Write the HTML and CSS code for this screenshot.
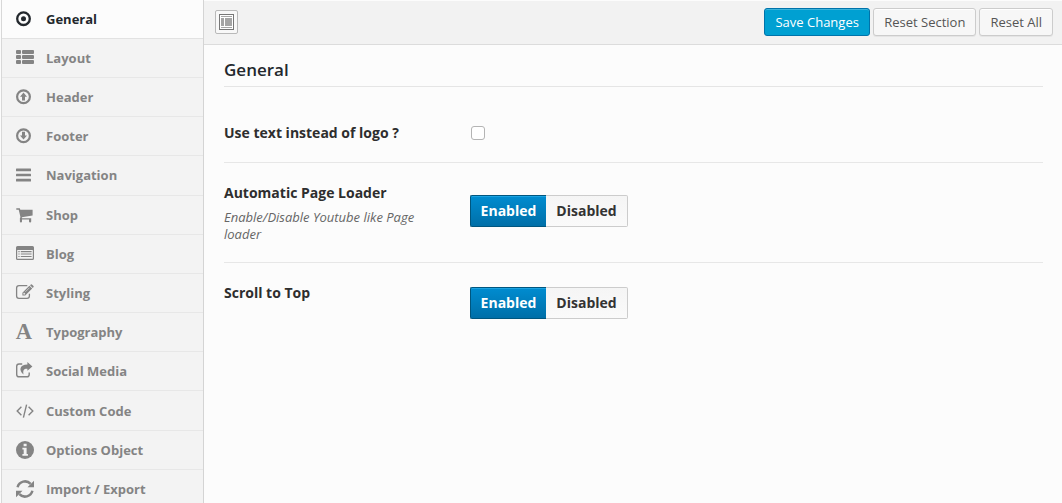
FILE: index.html
```html
<!DOCTYPE html>
<html lang="en">
<head>
<meta charset="utf-8">
<title>Theme Options</title>
<link rel="stylesheet" href="styles.css">
</head>
<body>
<div class="panel">
  <nav class="sidebar">
    <ul class="menu">
      <li class="item active"><svg class="icon" viewBox="0 0 20 20"><circle class="line" cx="8.5" cy="9.7" r="6.3" stroke-width="2.3"/><circle cx="8.5" cy="9.7" r="2.5"/></svg>General</li>
      <li class="item"><svg class="icon" viewBox="0 0 20 20"><rect x="1" y="2" width="5" height="4" rx="1"/><rect x="7" y="2" width="12" height="4" rx="1"/><rect x="1" y="7" width="5" height="4" rx="1"/><rect x="7" y="7" width="12" height="4" rx="1"/><rect x="1" y="12" width="5" height="4" rx="1"/><rect x="7" y="12" width="12" height="4" rx="1"/></svg>Layout</li>
      <li class="item"><svg class="icon" viewBox="0 0 20 20"><circle class="line" cx="8.5" cy="9.7" r="6.4" stroke-width="2.2"/><path d="M8.5 5.6 12 9.8H10V13.4H7V9.8H5Z"/></svg>Header</li>
      <li class="item"><svg class="icon" viewBox="0 0 20 20"><circle class="line" cx="8.5" cy="9.7" r="6.4" stroke-width="2.2"/><path d="M8.5 13.6 12 9.4H10V5.8H7V9.4H5Z"/></svg>Footer</li>
      <li class="item"><svg class="icon" viewBox="0 0 20 20"><rect x="1" y="3.6" width="15" height="2.6" rx=".5"/><rect x="1" y="8.7" width="15" height="2.6" rx=".5"/><rect x="1" y="13.8" width="15" height="2.6" rx=".5"/></svg>Navigation</li>
      <li class="item"><svg class="icon" viewBox="0 0 20 20"><path d="M1.3 3.3H4.8L5.3 4.7H17.6V10.4L6.8 12.2 7 13.2H16.2V16.4A.9.9 0 0 1 14 16.4V14.6H7V16.4A.9.9 0 0 1 4.9 16.4V13L5.5 12.2 3.7 4.7H1.3Z"/></svg>Shop</li>
      <li class="item"><svg class="icon" viewBox="0 0 20 20"><path fill-rule="evenodd" d="M2.5 2H17.5A1.5 1.5 0 0 1 19 3.5V14.5A1.5 1.5 0 0 1 17.5 16H2.5A1.5 1.5 0 0 1 1 14.5V3.5A1.5 1.5 0 0 1 2.5 2ZM2.2 6V14.3Q2.2 14.8 2.7 14.8H17.3Q17.8 14.8 17.8 14.3V6Z"/><path d="M3.4 7h1.2v1.2H3.4ZM5.8 7h10.8v1.2H5.8ZM3.4 9.4h1.2v1.2H3.4ZM5.8 9.4h10.8v1.2H5.8ZM3.4 11.9h1.2v1.2H3.4ZM5.8 11.9h10.8v1.2H5.8Z"/></svg>Blog</li>
      <li class="item"><svg class="icon" viewBox="0 0 20 20"><path class="line" d="M12.3 2.6H4Q1.6 2.6 1.6 5V13Q1.6 15.4 4 15.4H12Q14.4 15.4 14.4 13V10.8" stroke-width="1.3"/><path fill-rule="evenodd" d="M14.4 2.8 17.2 5.6 10.2 12.6H7.4V9.8ZM8.4 10.2V11.6H9.8L10.4 11 9 9.6ZM15 2.2 15.9 1.4Q16.4 1 16.9 1.4L18.5 3Q19 3.6 18.5 4.1L17.8 5Z"/><path class="cut" d="M10.4 8.8 14.5 4.7"/></svg>Styling</li>
      <li class="item"><svg class="icon" viewBox="0 0 20 20"><text class="letter" x="8.8" y="17" text-anchor="middle">A</text></svg>Typography</li>
      <li class="item"><svg class="icon" viewBox="0 0 20 20"><path class="line" d="M7.2 3H4Q1.7 3 1.7 5.3V13.4Q1.7 15.8 4 15.8H11.9Q14.2 15.8 14.2 13.4V11.6" stroke-width="1.4"/><path d="M12.4 1 17.4 5.4 12.4 9.8V7.7C9 7.5 7.6 9 8.6 13.6C3.4 9 4.6 3.6 12.4 3.4Z"/></svg>Social Media</li>
      <li class="item"><svg class="icon" viewBox="0 0 20 20"><path class="line" d="M6.4 5.8 2.2 10 6.4 14.2M13.6 5.8 17.8 10 13.6 14.2M11.6 3.6 8.4 16.6" stroke-width="1.4"/></svg>Custom Code</li>
      <li class="item"><svg class="icon" viewBox="0 0 20 20"><circle cx="10" cy="10" r="9"/><path class="hole" d="M8.6 3.8h3v2.5h-3ZM7.4 7.7h4.2v6.2h1.3v1.8H7.4v-1.8h1.3V9.4H7.4Z"/></svg>Options Object</li>
      <li class="item"><svg class="icon" viewBox="0 0 20 20"><path class="line" d="M2.6 8.2A7.6 7.6 0 0 1 15.6 4.9M17.4 11.8A7.6 7.6 0 0 1 4.4 15.1" stroke-width="2.5"/><path d="M19 1.8V8.3H12.5ZM1 18.2V11.7H7.5Z"/></svg>Import / Export</li>
    </ul>
  </nav>
  <main class="main">
    <header class="toolbar">
      <button class="expand" aria-label="Expand"><svg class="expand-icon" viewBox="0 0 15 16"><rect class="frame" x=".5" y=".5" width="14" height="15"/><path class="shade" d="M2 2h11v1H2ZM2 4h3v8H2ZM6 4h7v8H6ZM2 13h11v1H2Z"/></svg></button>
      <div class="actions">
        <button class="btn primary">Save Changes</button>
        <button class="btn">Reset Section</button>
        <button class="btn">Reset All</button>
      </div>
    </header>
    <section class="content">
      <h2 class="title">General</h2>
      <div class="field logo-field">
        <div class="label">Use text instead of logo ?</div>
        <div class="control"><span class="checkbox" role="checkbox" aria-checked="false"></span></div>
      </div>
      <div class="field loader-field">
        <div class="label">Automatic Page Loader<span class="hint">Enable/Disable Youtube like Page loader</span></div>
        <div class="control"><div class="switch"><span class="on">Enabled</span><span class="off">Disabled</span></div></div>
      </div>
      <div class="field scroll-field">
        <div class="label">Scroll to Top</div>
        <div class="control"><div class="switch"><span class="on">Enabled</span><span class="off">Disabled</span></div></div>
      </div>
    </section>
  </main>
</div>
</body>
</html>
```

FILE: styles.css
```css
* { box-sizing: border-box; }
body { margin: 0; overflow: hidden; background: #fcfcfc; font-family: "Open Sans", sans-serif; }
button { font-family: inherit; }
.panel { display: flex; height: 503px; padding-left: 1px; overflow: hidden; }
.sidebar { width: 203px; flex: none; background: #f3f3f3; border-left: 1px solid #d8d8d8; border-right: 1px solid #d4d4d4; }
.menu { list-style: none; margin: -0.4px 0 0; padding: 0; }
.item { display: flex; align-items: center; height: 39.2px; padding-left: 13px; border-bottom: 1px solid #e7e7e7; color: #848484; font-size: 13px; font-weight: 700; line-height: 18px; white-space: nowrap; }
.item.active { background: #fcfcfc; color: #23282d; border-bottom-color: #e2e2e2; }
.icon { width: 20px; height: 20px; margin-right: 11px; fill: currentColor; flex: none; overflow: visible; }
.line { fill: none; stroke: currentColor; }
.cut { stroke: #f3f3f3; stroke-width: .6; }
.hole { fill: #f3f3f3; }
.letter { font: bold 22.5px "Liberation Serif", serif; }
.main { flex: 1; padding-top: 1px; }
.toolbar { display: flex; justify-content: space-between; align-items: flex-start; height: 44px; padding: 7px 9px 0 11px; background: #f2f2f2; border-bottom: 1px solid #dcdcdc; }
.expand { width: 23px; height: 24px; margin-top: 2px; padding: 3px; background: #f8f8f8; border: 1px solid #b9b9b9; border-radius: 2px; line-height: 0; }
.expand-icon { width: 15px; height: 16px; display: block; }
.frame { fill: #fff; stroke: #777; stroke-width: 1; }
.shade { fill: #a5a5a5; }
.actions { display: flex; gap: 3px; }
.btn { height: 28px; padding: 1px 10px 0; border: 1px solid #ccc; border-radius: 3px; background: #f7f7f7; color: #555; font-size: 13px; line-height: 25px; box-shadow: inset 0 1px 0 #fff, 0 1px 0 rgba(0,0,0,.05); white-space: nowrap; }
.btn.primary { width: 106px; background: #00a0d2; border-color: #0073aa; color: #fff; box-shadow: inset 0 1px 0 rgba(120,200,230,.5); }
.content { padding: 0 19px 0 20px; }
.title { margin: 0; height: 42px; padding-top: 13px; border-bottom: 1px solid #e5e5e5; color: #23282d; font-size: 17px; font-weight: 600; line-height: 24px; }
.field { display: flex; border-bottom: 1px solid #e7e7e7; }
.label { width: 246px; flex: none; color: #2e2e2e; font-size: 14px; font-weight: 700; line-height: 20px; }
.hint { display: block; width: 200px; margin-top: 6px; color: #666; font-size: 13px; font-style: italic; font-weight: 400; line-height: 17px; }
.logo-field { height: 76px; padding-top: 36px; }
.loader-field { height: 100px; padding-top: 20px; }
.scroll-field { height: 100px; padding-top: 20px; border-bottom: 0; }
.checkbox { display: block; width: 14px; height: 14px; margin: 3px 0 0 1px; border: 1px solid #b4b4b4; border-radius: 3px; background: #fff; }
.switch { display: flex; width: 158px; height: 32px; margin-top: 12px; font-size: 14px; font-weight: 700; line-height: 30px; text-align: center; }
.on { width: 76px; border: 1px solid #00567f; border-right-width: 0; border-radius: 2px 0 0 2px; background: linear-gradient(#008cd0, #006fa8); box-shadow: inset 0 1px 0 #1ba3e2; color: #fff; }
.off { width: 82px; border: 1px solid #ccc; border-left: 0; border-radius: 0 2px 2px 0; background: linear-gradient(#f5f5f5, #fafafa); color: #333; }
.scroll-field .switch { margin-top: 4px; }
```
